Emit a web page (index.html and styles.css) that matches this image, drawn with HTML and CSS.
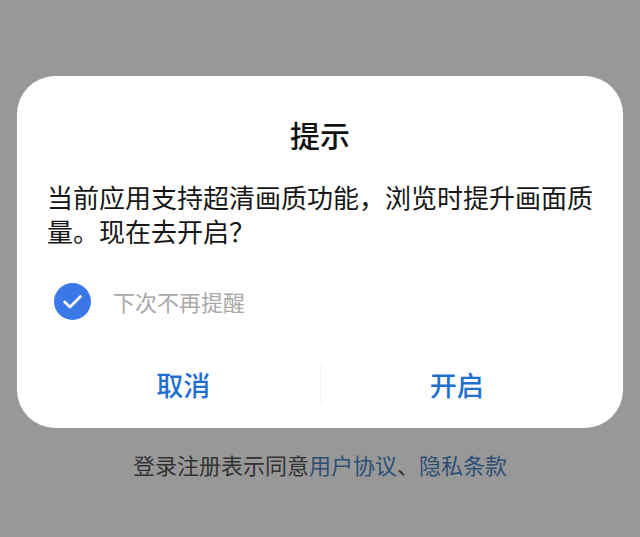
FILE: index.html
```html
<html>
  <head>
    <title>提示</title>
    <meta charset="utf-8">
    <link rel="stylesheet" href="styles.css">
  </head>
  <body>
    <div class="dialog">
      <h1 class="title">提示</h1>
      <p class="message">当前应用支持超清画质功能，浏览时提升画面质量。现在去开启？</p>
      <label class="remember">
        <span class="check">
          <svg width="37" height="37" viewBox="0 0 37 37">
            <circle cx="18.5" cy="18.5" r="18.5" fill="#3b78e7"/>
            <path d="M10.5 18.8 L16 24 L26.5 13.5" fill="none" stroke="#fff" stroke-width="2.6" stroke-linecap="round" stroke-linejoin="round"/>
          </svg>
        </span>
        <span class="remember-text">下次不再提醒</span>
      </label>
      <div class="actions">
        <button class="action">取消</button>
        <span class="divider"></span>
        <button class="action">开启</button>
      </div>
    </div>
    <p class="agreement">登录注册表示同意<a href="#">用户协议</a>、<a href="#">隐私条款</a></p>
  </body>
</html>
```

FILE: styles.css
```css
body {
  margin: 0;
  background-color: #989898;
  font-family: "Noto Sans CJK SC", "Noto Sans", sans-serif;
  height: 537px;
  overflow: hidden;
}
.dialog {
  margin: 76px 17px 0;
  height: 352px;
  box-sizing: border-box;
  padding: 38px 30px 0;
  background-color: #fff;
  border-radius: 38px;
}
.title {
  margin: 0;
  text-align: center;
  font-size: 30px;
  line-height: 40px;
  font-weight: 500;
  color: #111;
}
.message {
  margin: 26px 0 0;
  font-size: 26px;
  line-height: 34px;
  color: #161616;
}
.remember {
  display: flex;
  align-items: center;
  height: 40px;
  margin-top: 33px;
  padding-left: 7px;
}
.check {
  display: flex;
  width: 37px;
  height: 37px;
}
.remember-text {
  margin-left: 22px;
  font-size: 22px;
  color: #a8a8a8;
}
.actions {
  display: flex;
  align-items: center;
  height: 60px;
  margin-top: 33px;
}
.action {
  flex: 1;
  border: 0;
  background: none;
  padding: 0;
  font-family: inherit;
  font-size: 27px;
  font-weight: 500;
  color: #1f6fd0;
}
.divider {
  width: 1px;
  height: 40px;
  background-color: #f2f2f2;
}
.agreement {
  margin: 21px 0 0;
  text-align: center;
  font-size: 22px;
  line-height: 30px;
  color: #333;
}
.agreement a {
  color: #2d4f74;
  text-decoration: none;
}
```
